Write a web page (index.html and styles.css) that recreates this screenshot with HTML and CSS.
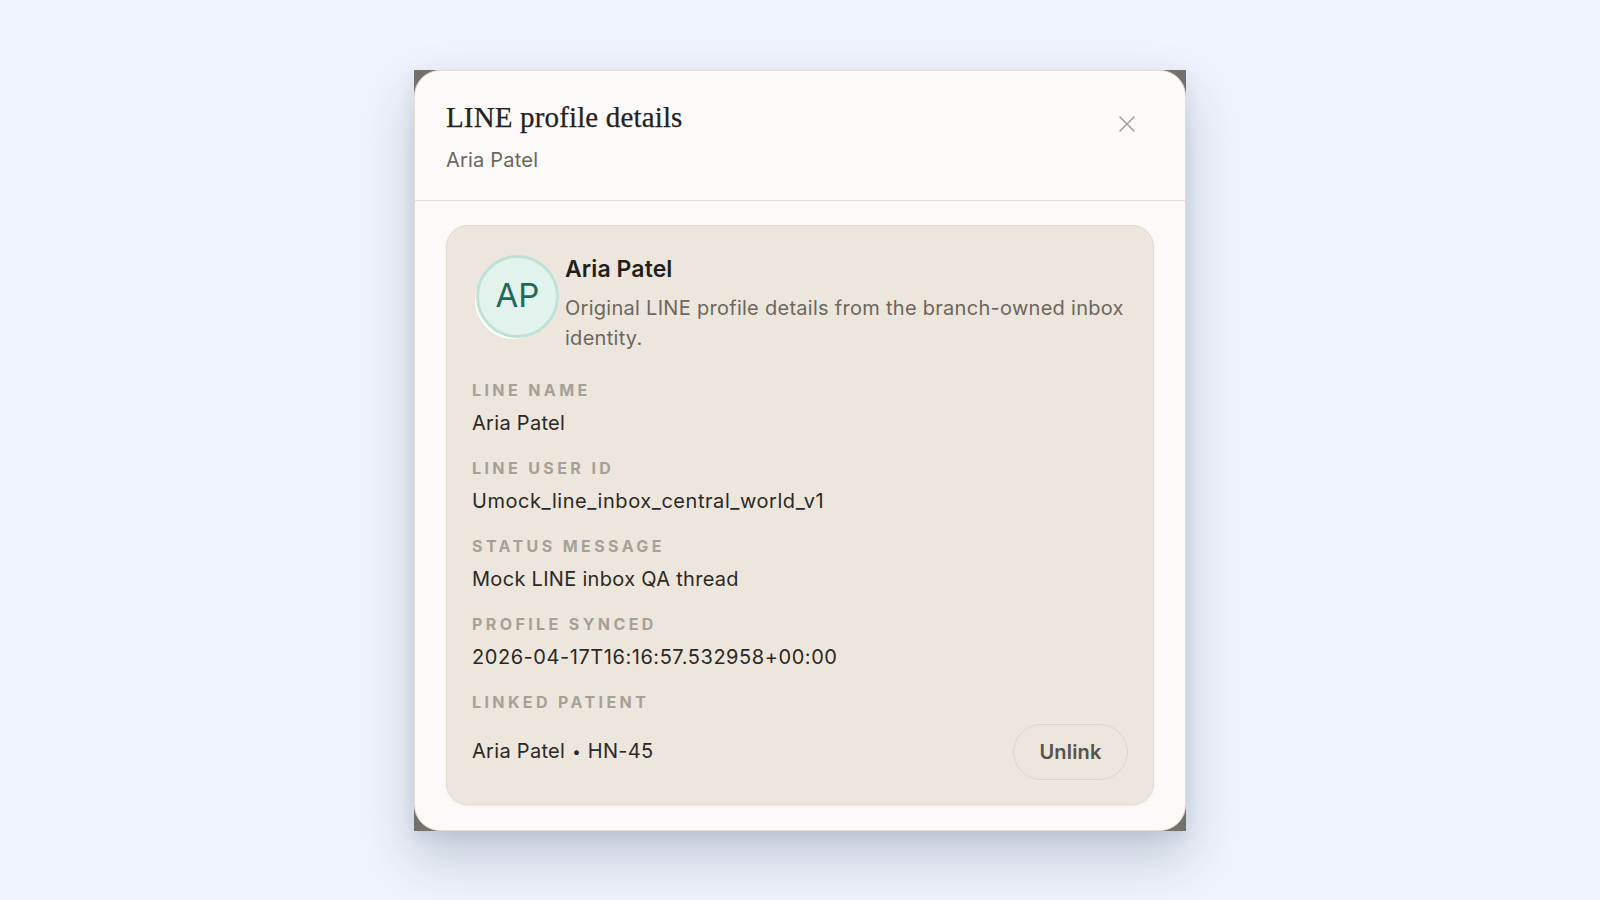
FILE: index.html
```html
<!DOCTYPE html>
<html lang="en">
<head>
<meta charset="utf-8">
<title>LINE profile details</title>
<link rel="stylesheet" href="styles.css">
</head>
<body>
<div class="page">
  <div class="dialog-frame">
    <div class="dialog" role="dialog" aria-labelledby="dlg-title">
      <header class="dialog-header">
        <div class="heading">
          <h2 class="title" id="dlg-title">LINE profile details</h2>
          <p class="subtitle">Aria Patel</p>
        </div>
        <button class="close" aria-label="Close">
          <svg width="18" height="18" viewBox="0 0 18 18" fill="none" stroke="currentColor" stroke-width="1.5" stroke-linecap="round"><path d="M2 2L16 16M16 2L2 16"/></svg>
        </button>
      </header>
      <div class="dialog-body">
        <section class="card">
          <div class="profile">
            <div class="avatar">AP</div>
            <div class="profile-text">
              <div class="name">Aria Patel</div>
              <p class="desc">Original LINE profile details from the branch-owned inbox identity.</p>
            </div>
          </div>
          <dl class="fields">
            <div class="field">
              <dt class="label">LINE name</dt>
              <dd class="value">Aria Patel</dd>
            </div>
            <div class="field">
              <dt class="label">LINE user ID</dt>
              <dd class="value value-wide">Umock_line_inbox_central_world_v1</dd>
            </div>
            <div class="field">
              <dt class="label">Status message</dt>
              <dd class="value">Mock LINE inbox QA thread</dd>
            </div>
            <div class="field">
              <dt class="label">Profile synced</dt>
              <dd class="value value-wide">2026-04-17T16:16:57.532958+00:00</dd>
            </div>
            <div class="field">
              <dt class="label">Linked patient</dt>
              <dd class="linked-row">
                <span class="value-inline">Aria Patel <span class="dot">•</span> HN-45</span>
                <button class="unlink">Unlink</button>
              </dd>
            </div>
          </dl>
        </section>
      </div>
    </div>
  </div>
</div>
</body>
</html>
```

FILE: styles.css
```css
* { box-sizing: border-box; }

html, body {
  margin: 0;
  padding: 0;
}

body {
  background: #eef3fc;
  font-family: Inter, "Noto Sans", "Liberation Sans", sans-serif;
  color: #2b2925;
}

.page {
  min-height: 100vh;
  display: flex;
  align-items: center;
  justify-content: center;
}

.dialog-frame {
  width: 772px;
  background: #72716b;
  box-shadow: 0 26px 50px rgba(40, 50, 72, 0.22), 0 6px 14px rgba(40, 50, 72, 0.08);
}

.dialog {
  background: #fbfaf8;
  border: 1px solid #e3ded4;
  border-radius: 26px;
}

.dialog-header {
  display: flex;
  justify-content: space-between;
  align-items: flex-start;
  padding: 28px 32px 26px 31px;
  border-bottom: 1px solid #e6e1d8;
}

.title {
  margin: 0;
  font-family: "Liberation Serif", "DejaVu Serif", serif;
  font-weight: 400;
  font-size: 29px;
  line-height: 36px;
  letter-spacing: 0.15px;
  color: #24221e;
  -webkit-text-stroke: 0.25px #24221e;
}

.subtitle {
  margin: 11px 0 0;
  font-size: 20px;
  line-height: 28px;
  letter-spacing: 0.2px;
  color: #6b675f;
}

.close {
  width: 40px;
  height: 40px;
  margin: 5px 6px 0 0;
  padding: 0;
  border: none;
  background: none;
  color: #a19d94;
  display: flex;
  align-items: center;
  justify-content: center;
  cursor: pointer;
}

.dialog-body {
  padding: 24px 31px 25px 31px;
}

.card {
  background: #ede6dc;
  border: 1px solid #e3dcd0;
  border-radius: 22px;
  padding: 29px 25px 24px 25px;
  box-shadow: 0 1px 3px rgba(60, 50, 30, 0.08);
}

.profile {
  display: flex;
  align-items: flex-start;
  gap: 6px;
}

.avatar {
  flex: none;
  width: 83px;
  height: 83px;
  margin-left: 4px;
  padding-bottom: 3px;
  border-radius: 50%;
  border: 3px solid #bfe2d7;
  background: #e2f2ec;
  color: #1e6a5b;
  font-size: 33px;
  font-weight: 400;
  display: flex;
  align-items: center;
  justify-content: center;
  box-shadow: -4px 4px 0 -3px rgba(255, 255, 255, 0.9);
}

.profile-text {
  flex: 1;
  min-width: 0;
  margin-top: 2px;
}

.name {
  font-size: 23px;
  line-height: 24px;
  font-weight: 600;
  letter-spacing: 0.1px;
  color: #221f1b;
}

.desc {
  margin: 12px 0 0;
  font-size: 20px;
  line-height: 30px;
  letter-spacing: 0.28px;
  color: #6b675e;
}

.fields {
  margin: 27px 0 0;
  display: flex;
  flex-direction: column;
  gap: 21px;
}

.field {
  margin: 0;
}

.label {
  font-size: 16px;
  line-height: 20px;
  font-weight: 700;
  letter-spacing: 3.4px;
  text-transform: uppercase;
  color: #a5a196;
}

.value {
  margin: 9px 0 0;
  font-size: 20px;
  line-height: 28px;
  letter-spacing: 0.3px;
  color: #2b2925;
}

.value-wide {
  letter-spacing: 0.55px;
}

.linked-row {
  margin: 12px 0 0;
  display: flex;
  align-items: center;
  justify-content: space-between;
}

.value-inline {
  font-size: 20px;
  line-height: 28px;
  letter-spacing: 0.3px;
  color: #2b2925;
}

.dot {
  font-size: 15px;
  vertical-align: 1px;
  margin: 0 1px;
}

.unlink {
  width: 115px;
  height: 56px;
  border-radius: 28px;
  border: 1px solid #ddd5c9;
  background: #ece5db;
  font-family: inherit;
  font-size: 20px;
  font-weight: 600;
  letter-spacing: 0.2px;
  color: #56534b;
  cursor: pointer;
}
```
